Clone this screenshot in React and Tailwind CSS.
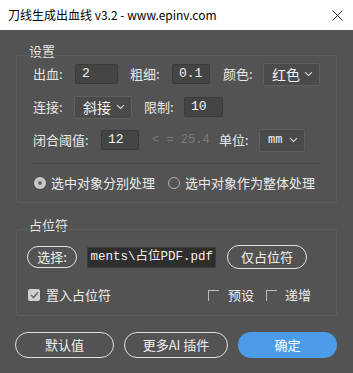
import React from "react";

const cjk = { fontFamily: '"Noto Sans CJK SC", "Microsoft YaHei", sans-serif' };
const mono = { fontFamily: '"Liberation Mono", "Noto Sans CJK SC", monospace' };

function Input({ value, w }) {
  return (
    <div
      className={`${w} h-[20px] flex items-center pl-[6px] bg-[#444444] border border-[#3b3b3b] rounded-[2px] text-[13px] text-[#f2f2f2]`}
      style={mono}
    >
      {value}
    </div>
  );
}

function Select({ value, w, small }) {
  return (
    <div
      className={`${w} h-[23px] flex items-center justify-between pl-[8px] pr-[6px] bg-[#4a4a4a] border border-[#5f5f5f] rounded-[2px] text-[#f2f2f2]`}
    >
      <span className={small ? "text-[12px]" : "text-[14px]"} style={small ? mono : cjk}>
        {value}
      </span>
      <svg width="9" height="6" viewBox="0 0 9 6">
        <path d="M1 1.2 L4.5 4.5 L8 1.2" fill="none" stroke="#d8d8d8" strokeWidth="1.1" />
      </svg>
    </div>
  );
}

function Label({ children, w }) {
  return <span className={`${w} text-[13px] text-[#e8e8e8] leading-[16px]`}>{children}</span>;
}

function Pill({ children, w, h = "h-[23px]" }) {
  return (
    <div
      className={`${w} ${h} flex items-center justify-center rounded-full border-[1.5px] border-[#e2e2e2] text-[13px] text-[#f0f0f0]`}
    >
      {children}
    </div>
  );
}

export default function App() {
  return (
    <div className="w-[353px] h-[373px] flex flex-col bg-[#535353] overflow-hidden" style={cjk}>
      {/* title bar */}
      <div className="h-[30px] bg-white flex items-center justify-between pl-[8px] pr-[10px]">
        <span className="text-[12px] text-black leading-[16px]">刀线生成出血线 v3.2 - www.epinv.com</span>
        <svg width="11" height="11" viewBox="0 0 11 11">
          <path d="M0.5 0.5 L10.5 10.5 M10.5 0.5 L0.5 10.5" stroke="#222" strokeWidth="1" />
        </svg>
      </div>

      <div className="flex flex-col px-[16px] pt-[13px]">
        {/* group 1 */}
        <div className="pl-[13px] h-[12px] text-[13px] leading-[16px] text-[#e8e8e8]">设置</div>
        <div className="border border-[#5d5d5d] rounded-[2px] px-[16px] pt-[7px] pb-[11px] flex flex-col">
          <div className="h-[22px] flex items-center">
            <Label w="w-[42px]">出血:</Label>
            <Input value="2" w="w-[43px]" />
            <span className="w-[12px]" />
            <Label w="w-[42px]">粗细:</Label>
            <Input value="0.1" w="w-[38px]" />
            <span className="w-[13px]" />
            <Label w="w-[40px]">颜色:</Label>
            <Select value="红色" w="w-[57px]" />
          </div>
          <div className="h-[22px] mt-[11px] flex items-center">
            <Label w="w-[41px]">连接:</Label>
            <Select value="斜接" w="w-[58px]" />
            <span className="w-[12px]" />
            <Label w="w-[40px]">限制:</Label>
            <Input value="10" w="w-[39px]" />
          </div>
          <div className="h-[22px] mt-[11px] flex items-center">
            <Label w="w-[68px]">闭合阈值:</Label>
            <Input value="12" w="w-[38px]" />
            <span className="w-[13px]" />
            <span className="w-[67px] text-[12px] text-[#7c7c7c] whitespace-pre" style={mono}>
              &lt; = 25.4
            </span>
            <Label w="w-[40px]">单位:</Label>
            <Select value="mm" w="w-[46px]" small />
          </div>
          <div className="h-px bg-[#474747] mt-[12px]" />
          <div className="h-[16px] mt-[11px] flex items-center">
            <span className="w-[12px] h-[12px] rounded-full bg-[#c9c9c9] flex items-center justify-center ml-[1px]">
              <span className="w-[4px] h-[4px] rounded-full bg-[#6a6a6a]" />
            </span>
            <span className="ml-[5px] text-[13px] text-[#ececec] leading-[16px]">选中对象分别处理</span>
            <span className="w-[12px] h-[12px] rounded-full border border-[#b0b0b0] ml-[13px]" />
            <span className="ml-[5px] text-[13px] text-[#ececec] leading-[16px]">选中对象作为整体处理</span>
          </div>
        </div>

        {/* group 2 */}
        <div className="pl-[13px] h-[12px] mt-[14px] text-[13px] leading-[16px] text-[#e8e8e8]">占位符</div>
        <div className="border border-[#5d5d5d] rounded-[2px] pl-[10px] pr-[16px] pt-[15px] pb-[12px] flex flex-col">
          <div className="h-[24px] flex items-center">
            <Pill w="w-[50px]" h="h-[22px]">选择:</Pill>
            <div
              className="ml-[10px] w-[129px] h-[21px] flex items-center justify-end pr-[2px] bg-[#2e2e2e] border border-[#3c3c3c] text-[12.5px] text-[#f2f2f2] overflow-hidden whitespace-nowrap"
              style={mono}
            >
              ments\占位PDF.pdf
            </div>
            <span className="w-[11px]" />
            <Pill w="w-[80px]" h="h-[24px]">仅占位符</Pill>
          </div>
          <div className="h-[16px] mt-[18px] flex items-center">
            <span className="ml-[1px] w-[12px] h-[12px] rounded-[2px] bg-[#cfcfcf] flex items-center justify-center">
              <svg width="9" height="8" viewBox="0 0 9 8">
                <path d="M1 4 L3.5 6.5 L8 1.2" fill="none" stroke="#6b6b6b" strokeWidth="1.6" />
              </svg>
            </span>
            <span className="ml-[6px] text-[13px] text-[#ececec] leading-[16px]">置入占位符</span>
            <span className="ml-auto w-[11px] h-[11px] border-t border-l border-[#bdbdbd]" />
            <span className="ml-[9px] text-[13px] text-[#ececec] leading-[16px]">预设</span>
            <span className="ml-[12px] w-[11px] h-[11px] border-t border-l border-[#bdbdbd]" />
            <span className="ml-[8px] text-[13px] text-[#ececec] leading-[16px]">递增</span>
            <span className="w-[9px]" />
          </div>
        </div>

        {/* buttons */}
        <div className="mt-[16px] flex items-center gap-[10px]">
          <div className="w-[99px] h-[26px] -ml-px flex items-center justify-center rounded-full border-[1.5px] border-[#e0e0e0] text-[13px] text-[#f0f0f0]">
            默认值
          </div>
          <div className="w-[104px] h-[26px] flex items-center justify-center rounded-full border-[1.5px] border-[#e0e0e0] text-[13px] text-[#f0f0f0]">
            更多AI 插件
          </div>
          <div className="w-[99px] h-[26px] flex items-center justify-center rounded-full bg-[#4d9ce9] text-[13px] text-white">
            确定
          </div>
        </div>
      </div>
    </div>
  );
}
